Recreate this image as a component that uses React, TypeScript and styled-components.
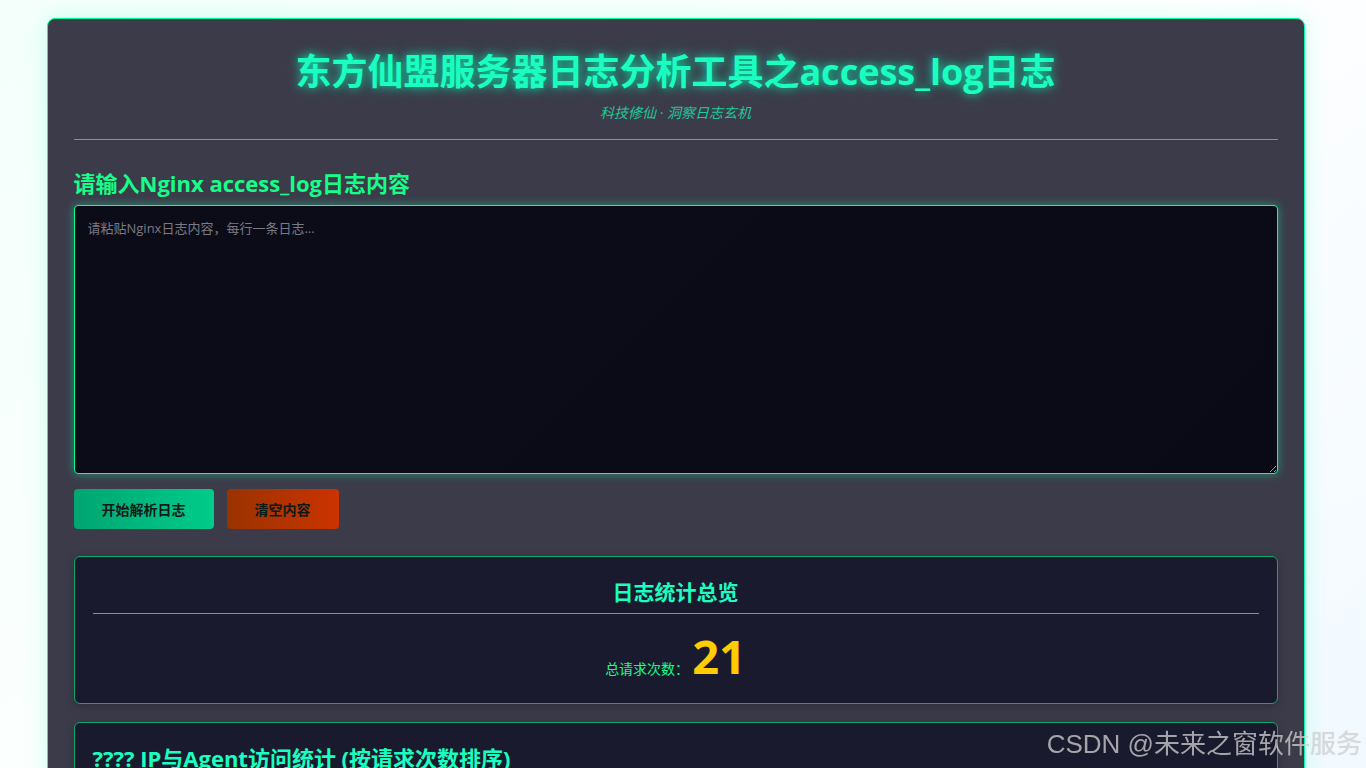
import React, { useState } from "react";
import styled, { createGlobalStyle } from "styled-components";

const GlobalStyle = createGlobalStyle`
  html, body {
    margin: 0;
    padding: 0;
  }
  body {
    background: linear-gradient(135deg, #f4fffb 0%, #ffffff 50%, #eef8ff 100%);
    min-height: 100vh;
    font-family: "Open Sans", "Noto Sans CJK SC", sans-serif;
  }
  * { box-sizing: border-box; }
`;

const Page = styled.div`
  padding: 18px 15px 40px 0;
`;

const Container = styled.div`
  width: 1258px;
  margin: 0 auto;
  background: #3c3b4a;
  border: 1px solid #00ff9d;
  border-radius: 8px;
  padding: 26px 26px 30px;
  box-shadow: 0 0 24px rgba(0, 255, 170, 0.18);
`;

const Header = styled.header`
  text-align: center;
  padding-bottom: 17px;
  border-bottom: 1px solid #8c8f9a;
  margin-bottom: 29px;
`;

const Title = styled.h1`
  margin: 0;
  font-size: 36px;
  line-height: 54px;
  font-weight: 700;
  color: #1affc0;
  text-shadow: 0 0 8px rgba(0, 255, 190, 0.7), 0 0 16px rgba(0, 255, 190, 0.35);
`;

const Subtitle = styled.p`
  margin: 4px 0 0;
  font-size: 14px;
  line-height: 19px;
  font-style: italic;
  color: #20c99a;
`;

const SectionTitle = styled.h2`
  margin: 0 0 8px;
  font-size: 22px;
  line-height: 28px;
  font-weight: 700;
  color: #14ff88;
`;

const LogInput = styled.textarea`
  display: block;
  width: 100%;
  height: 269px;
  background: linear-gradient(135deg, #0c0c18, #0a0a16);
  border: 1px solid #00ff9d;
  border-radius: 4px;
  box-shadow: 0 0 10px rgba(0, 255, 157, 0.45);
  color: #d0ffe8;
  padding: 12px 13px;
  font-family: "Open Sans", "Noto Sans CJK SC", sans-serif;
  font-size: 13px;
  resize: vertical;
  outline: none;

  &::placeholder {
    color: #7a7a84;
  }
`;

const ButtonRow = styled.div`
  display: flex;
  gap: 13px;
  margin: 15px 0 27px;
`;

const ActionButton = styled.button<{ $variant: "go" | "clear" }>`
  height: 40px;
  padding: 0 28px;
  border: none;
  border-radius: 4px;
  font-family: "Noto Sans CJK SC", sans-serif;
  font-size: 14px;
  font-weight: 700;
  color: #0e1a18;
  cursor: pointer;
  background: ${(p) =>
    p.$variant === "go"
      ? "linear-gradient(90deg, #00a572, #00cc8a)"
      : "linear-gradient(90deg, #993300, #cc3300)"};
`;

const Card = styled.section`
  background: #191a2e;
  border: 1px solid #0fa770;
  border-radius: 6px;
  padding: 18px 18px 20px;
  margin-bottom: 18px;
  box-shadow: 0 2px 10px rgba(0, 0, 0, 0.25);
`;

const CardTitle = styled.h3<{ $center?: boolean }>`
  margin: 0;
  font-size: ${(p) => (p.$center ? "21px" : "22px")};
  line-height: 34px;
  font-weight: 700;
  color: #1affc0;
  text-align: ${(p) => (p.$center ? "center" : "left")};
  ${(p) => (p.$center ? "padding-bottom: 4px; border-bottom: 1px solid #8c8f9a;" : "")}
`;

const TotalRow = styled.div`
  display: flex;
  justify-content: center;
  align-items: baseline;
  margin-top: 15px;
`;

const TotalLabel = styled.span`
  font-size: 14px;
  color: #14ff88;
  font-family: "Noto Sans CJK SC", sans-serif;
`;

const TotalValue = styled.span`
  font-size: 47px;
  line-height: 54px;
  font-weight: 700;
  color: #ffcc00;
  margin-left: 3px;
`;

const Table = styled.table`
  width: 100%;
  margin-top: 14px;
  border-collapse: collapse;
  font-size: 13px;
  color: #cfe;
  th, td {
    border-bottom: 1px solid #2e3048;
    padding: 8px 10px;
    text-align: left;
  }
  th { color: #1affc0; }
`;

const Watermark = styled.div`
  position: fixed;
  right: 4px;
  bottom: 8px;
  font-family: "Liberation Sans", "Noto Sans CJK SC", sans-serif;
  font-size: 26px;
  color: rgba(220, 220, 220, 0.72);
  pointer-events: none;
  text-shadow: 0 0 1px rgba(0, 0, 0, 0.2);
`;

export default function App() {
  const [text, setText] = useState("");

  return (
    <>
      <GlobalStyle />
      <Page>
        <Container>
          <Header>
            <Title>东方仙盟服务器日志分析工具之access_log日志</Title>
            <Subtitle>科技修仙 · 洞察日志玄机</Subtitle>
          </Header>

          <SectionTitle>请输入Nginx access_log日志内容</SectionTitle>
          <LogInput
            value={text}
            onChange={(e) => setText(e.target.value)}
            placeholder="请粘贴Nginx日志内容，每行一条日志..."
          />
          <ButtonRow>
            <ActionButton $variant="go">开始解析日志</ActionButton>
            <ActionButton $variant="clear" onClick={() => setText("")}>
              清空内容
            </ActionButton>
          </ButtonRow>

          <Card>
            <CardTitle $center>日志统计总览</CardTitle>
            <TotalRow>
              <TotalLabel>总请求次数：</TotalLabel>
              <TotalValue>21</TotalValue>
            </TotalRow>
          </Card>

          <Card>
            <CardTitle>???? IP与Agent访问统计 (按请求次数排序)</CardTitle>
            <Table>
              <thead>
                <tr>
                  <th>IP地址</th>
                  <th>User-Agent</th>
                  <th>请求次数</th>
                </tr>
              </thead>
              <tbody>
                <tr>
                  <td>192.168.1.10</td>
                  <td>Mozilla/5.0 (Windows NT 10.0; Win64; x64)</td>
                  <td>12</td>
                </tr>
                <tr>
                  <td>192.168.1.23</td>
                  <td>curl/7.68.0</td>
                  <td>9</td>
                </tr>
              </tbody>
            </Table>
          </Card>
        </Container>
      </Page>
      <Watermark>CSDN @未来之窗软件服务</Watermark>
    </>
  );
}
